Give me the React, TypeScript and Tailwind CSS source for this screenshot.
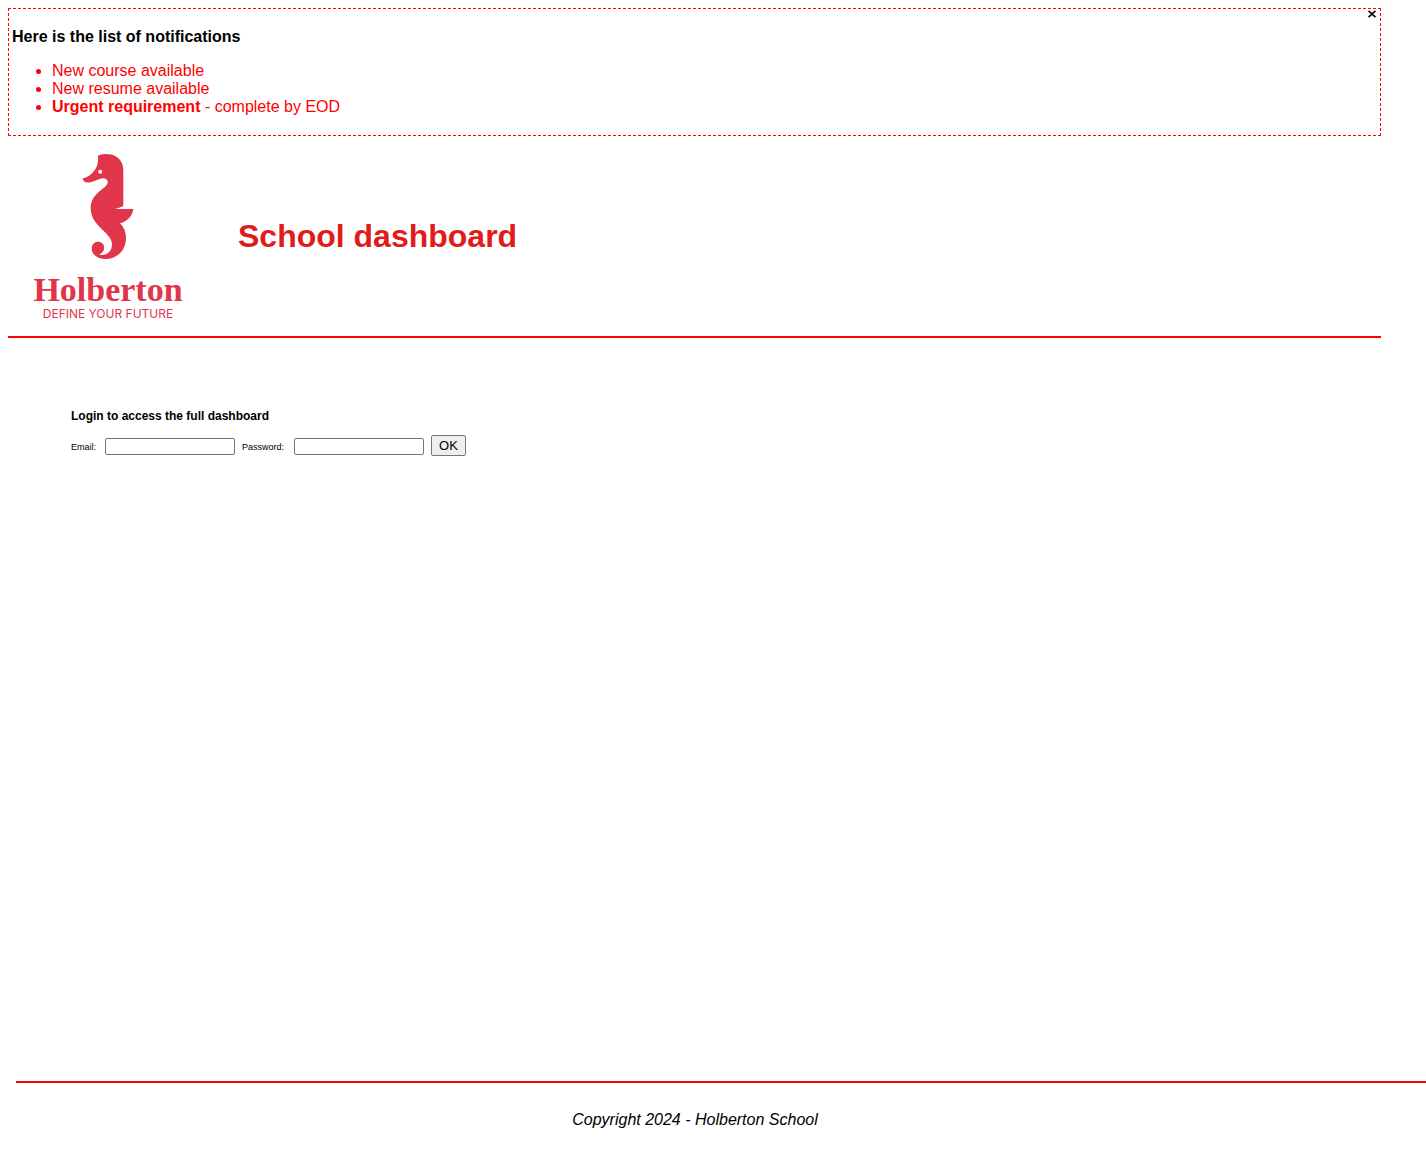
const notifications = [
  { id: 1, strong: '', text: 'New course available' },
  { id: 2, strong: '', text: 'New resume available' },
  { id: 3, strong: 'Urgent requirement', text: ' - complete by EOD' },
];

function Notifications() {
  return (
    <section className="relative mr-[45px] ml-2 border border-dashed border-[#ff0000] p-[3px]">
      <button type="button" aria-label="Close" className="absolute top-0 right-[3px] cursor-pointer">
        <svg width="10" height="10" viewBox="0 0 10 10" className="block" aria-hidden="true">
          <path d="M1.5 1.8 8.5 8.2M8.5 1.8 1.5 8.2" stroke="#111" strokeWidth="1.8" fill="none" />
        </svg>
      </button>
      <p className="my-4 font-bold">Here is the list of notifications</p>
      <ul className="my-4 list-disc pl-10 text-[#ff0000]">
        {notifications.map((item) => (
          <li key={item.id}>
            {item.strong && <b>{item.strong}</b>}
            {item.text}
          </li>
        ))}
      </ul>
    </section>
  );
}

function Logo() {
  return (
    <svg width="200" height="200" viewBox="0 0 200 200" role="img" aria-label="Holberton" fill="#e1354b" className="shrink-0">
      <path d="M90 19.5C96 17.3 103 17.7 108 20.5C113 23.5 115.3 28.5 115.3 34V70C112.5 71.2 110 72.2 107 73H125.3C124.6 79.5 119.5 85.8 112 87.3C116 91 118 96 118 102C118 114.5 109 123 97.5 123C89.5 123 83.7 118.5 83.7 112.5C83.7 108.5 86.5 105.7 90 105.7C93.8 105.7 96.2 108.3 96.2 111.5C96.2 115 93.8 117.8 90.5 118.6C99 120.5 104.5 114.5 104 107.5C103 96 82.7 90 82.7 72.5C82.7 58 95.5 54 99 48.5C101 45 98.5 42 94.5 42.3C89.5 43 84.5 46.6 79.5 46.6C77 46.6 75.3 45 74.6 42.6C81.5 40.5 86 36.5 88.5 31C90 27.5 90.3 23.5 90 19.5Z" />
      <circle cx="92.2" cy="35.7" r="2" fill="#fff" />
      <text x="100" y="165" textAnchor="middle" className="font-['Liberation_Serif',serif] text-[34px] font-bold">
        Holberton
      </text>
      <text x="100" y="182" textAnchor="middle" className="font-['Inter',sans-serif] text-[12px]">
        DEFINE YOUR FUTURE
      </text>
    </svg>
  );
}

function Login() {
  const field = 'mr-[7px] h-[17px] w-[130px] rounded-[2px] border border-[#767676] bg-white px-1 text-[10px] outline-none';
  return (
    <main className="flex-1 px-[71px] pt-[70px] text-[9px]">
      <p className="text-[12px] leading-4 font-bold">Login to access the full dashboard</p>
      <form className="mt-[11px] flex items-baseline" onSubmit={(e) => e.preventDefault()}>
        <label htmlFor="email" className="w-[34px]">Email:</label>
        <input id="email" type="email" className={field} />
        <label htmlFor="password" className="w-[52px]">Password:</label>
        <input id="password" type="password" className={field} />
        <button type="submit" className="flex h-[21px] w-[35px] items-center justify-center rounded-[2px] border border-[#767676] bg-[#efefef] text-[13px]">
          OK
        </button>
      </form>
    </main>
  );
}

export default function App() {
  return (
    <div className="flex min-h-screen flex-col overflow-x-hidden bg-white pt-2 font-['Liberation_Sans',Arial,sans-serif] text-[16px] leading-[18px] text-black">
      <Notifications />
      <header className="mr-[45px] ml-2 flex items-center gap-[30px] border-b-2 border-[#ff0000]">
        <Logo />
        <h1 className="text-[32px] leading-10 font-bold text-[#e11a1a]">School dashboard</h1>
      </header>
      <Login />
      <footer className="ml-4 border-t-2 border-[#ff0000] pt-7 pr-[52px] pb-[26px] text-center italic">
        <p>Copyright 2024 - Holberton School</p>
      </footer>
    </div>
  );
}
